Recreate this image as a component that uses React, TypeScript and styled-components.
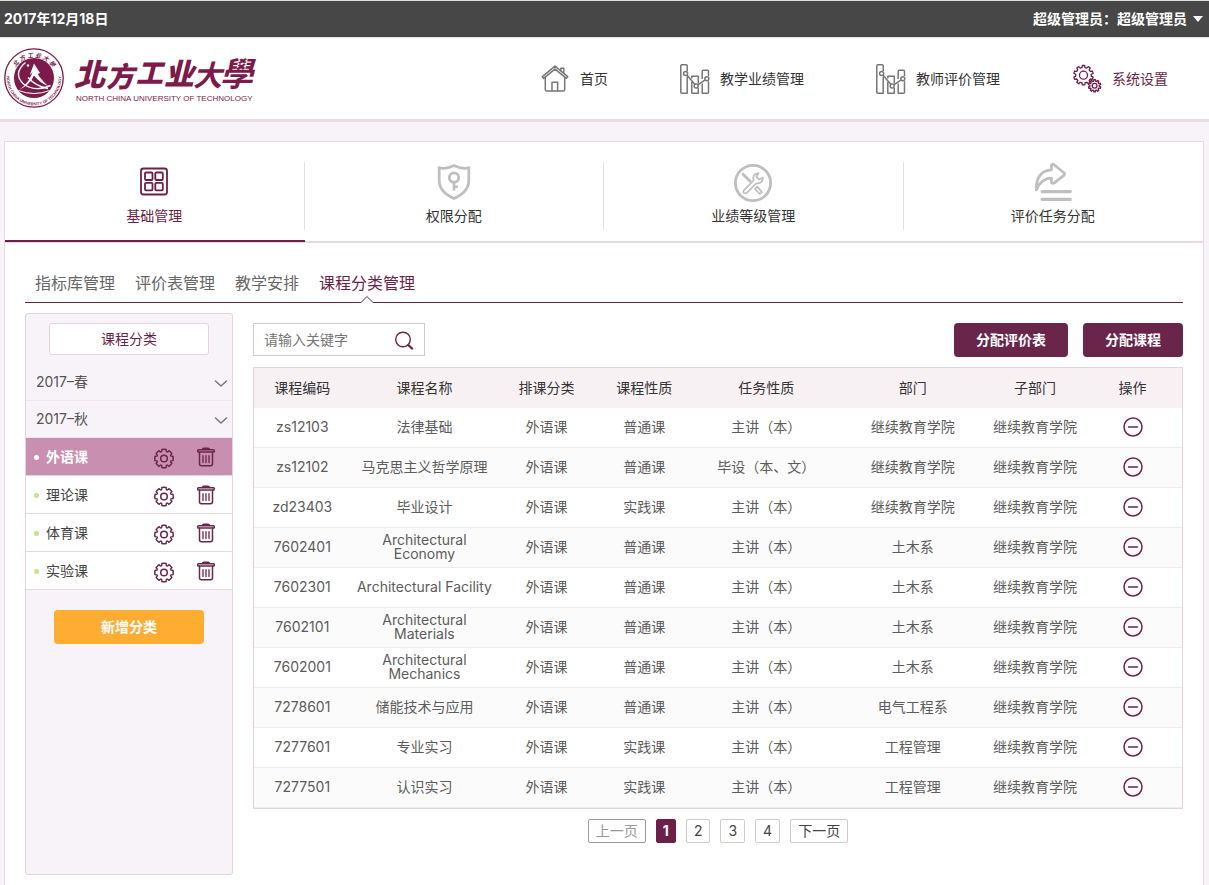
import React from "react";
import styled, { createGlobalStyle, css } from "styled-components";

const c = {
  wine: "#6b1f49",
  wineDark: "#69264a",
  logo: "#7d1a49",
  line: "#e8d9e0",
  tint: "#f8f3f8",
};

const GlobalStyle = createGlobalStyle`
  *, *::before, *::after { box-sizing: border-box; }
  body {
    margin: 0;
    background: ${c.tint};
    color: #333;
    font: 14px/20px Inter, "Noto Sans CJK SC", sans-serif;
  }
  button, input { font: inherit; color: inherit; }
  button { padding: 0; border: 0; background: none; cursor: pointer; }
  a { color: inherit; text-decoration: none; }
  ul { margin: 0; padding: 0; list-style: none; }
  svg { display: block; flex: none; }
`;

const Page = styled.div`
  display: flex;
  flex-direction: column;
  min-height: 100vh;
`;

const TopBar = styled.div`
  display: flex;
  align-items: center;
  justify-content: space-between;
  height: 38px;
  padding: 0 6px 0 4px;
  border-top: 1px solid #dcdedd;
  border-bottom: 1px solid #eddfe5;
  background: #474747;
  color: #fff;
  font-weight: 700;
`;

const UserMenu = styled.button`
  display: flex;
  align-items: center;
  gap: 6px;
  font-weight: 700;
`;

const Header = styled.header`
  display: flex;
  align-items: center;
  justify-content: space-between;
  height: 84px;
  padding: 0 41px 0 4px;
  border-bottom: 3px solid #e9dde3;
  background: #fff;
`;

const Nav = styled.nav`
  display: flex;
  gap: 72px;
`;

const NavLink = styled.a<{ $active?: boolean }>`
  display: flex;
  align-items: center;
  gap: 10px;
  color: ${(p) => (p.$active ? c.wine : "#333")};
  svg { color: ${(p) => (p.$active ? c.wine : "#777")}; }
`;

const Card = styled.main`
  flex: 1;
  margin: 19px 5px 0 4px;
  border: 1px solid ${c.line};
  border-bottom: 0;
  background: #fff;
`;

const Modules = styled.nav`
  display: flex;
  height: 101px;
  border-bottom: 2px solid ${c.line};
`;

const ModuleLink = styled.a<{ $active?: boolean }>`
  position: relative;
  display: flex;
  flex: 1;
  flex-direction: column;
  align-items: center;
  gap: 4px;
  padding: 20px 1px 0 0;
  color: ${(p) => (p.$active ? c.wine : "#333")};
  svg { color: ${(p) => (p.$active ? c.wine : "#bfbfbf")}; }

  &:not(:last-child)::before {
    content: "";
    position: absolute;
    top: 20px;
    right: 0;
    width: 1px;
    height: 68px;
    background: #e2e2e2;
  }
  ${(p) =>
    p.$active &&
    css`
      &::after {
        content: "";
        position: absolute;
        right: 0;
        bottom: -1px;
        left: 0;
        height: 2px;
        background: ${c.wine};
      }
    `}
`;

const SubTabs = styled.nav`
  display: flex;
  gap: 20px;
  height: 60px;
  margin: 0 20px;
  padding: 30px 10px 0;
  border-bottom: 1px solid ${c.wine};
  font-size: 16px;
`;

const SubTab = styled.a<{ $active?: boolean }>`
  position: relative;
  color: ${(p) => (p.$active ? c.wine : "#666")};
`;

const Pointer = styled.svg`
  position: absolute;
  bottom: -1px;
  left: 50%;
  margin-left: -7px;
`;

const Content = styled.div`
  display: flex;
  gap: 20px;
  padding: 10px 20px;
`;

const Sidebar = styled.aside`
  width: 208px;
  min-height: 562px;
  padding-top: 9px;
  border: 1px solid #e5d4dc;
  border-radius: 3px;
  background: ${c.tint};
`;

const SidebarTitle = styled.h2`
  width: 160px;
  margin: 0 auto 9px;
  border: 1px solid #e5d4dc;
  border-radius: 3px;
  background: #fff;
  color: ${c.wine};
  font-size: 14px;
  font-weight: 400;
  line-height: 30px;
  text-align: center;
`;

const Term = styled.button`
  display: flex;
  align-items: center;
  justify-content: space-between;
  width: 100%;
  height: 37px;
  padding: 0 4px 0 10px;
  border-bottom: 1px solid #efe6ec;
  color: #555;
`;

const Category = styled.li<{ $active?: boolean }>`
  display: flex;
  align-items: center;
  height: 38px;
  padding: 0 16px 0 8px;
  border-bottom: 1px solid ${c.line};
  background: ${(p) => (p.$active ? "#c98fb0" : "#fff")};
  color: ${(p) => (p.$active ? "#fff" : "#444")};
  font-weight: ${(p) => (p.$active ? 700 : 400)};

  &::before {
    content: "";
    width: 5px;
    height: 5px;
    margin: 2px 7px 0 0;
    border-radius: 50%;
    background: ${(p) => (p.$active ? "#fff" : "#bfe58d")};
  }
`;

const CategoryName = styled.span`
  flex: 1;
`;

const IconButton = styled.button`
  display: inline-block;
  color: ${c.wineDark};
`;

const CategoryActions = styled.div`
  display: flex;
  align-items: flex-start;
  gap: 22px;
  padding-top: 3px;
`;

const AddButton = styled.button`
  display: block;
  width: 150px;
  margin: 20px auto;
  border-radius: 4px;
  background: #ffac33;
  color: #fff;
  font-weight: 700;
  line-height: 34px;
`;

const Panel = styled.section`
  flex: 1;
  min-width: 0;
  padding-top: 10px;
`;

const Toolbar = styled.div`
  display: flex;
  align-items: flex-start;
  gap: 15px;
  margin-bottom: 10px;
`;

const SearchBox = styled.form`
  display: flex;
  align-items: center;
  width: 172px;
  height: 33px;
  margin-right: auto;
  padding: 0 10px;
  border: 1px solid #ccc;
`;

const SearchInput = styled.input`
  flex: 1;
  min-width: 0;
  padding: 0;
  border: 0;
  outline: 0;
  background: none;
  &::placeholder { color: #757575; }
`;

const ActionButton = styled.button`
  padding: 0 22px;
  border-radius: 4px;
  background: ${c.wineDark};
  color: #fff;
  font-weight: 700;
  line-height: 34px;
`;

const Table = styled.table`
  width: 100%;
  border: 1px solid #e5d4dc;
  border-spacing: 0;
  table-layout: fixed;
  line-height: 14px;
  text-align: center;
`;

const Col = styled.col<{ $wide: boolean }>`
  width: ${(p) => (p.$wide ? 135 : 90)}px;
`;

const HeadCell = styled.th`
  height: 40px;
  padding: 0 1px 0 0;
  background: #f8f1f4;
  font-weight: 400;
`;

const Row = styled.tr`
  &:nth-child(even) { background: #fbfbfb; }
`;

const Cell = styled.td`
  height: 40px;
  padding: 0 1px 2px 0;
  border-bottom: 1px solid #ececec;
  color: #5c5c5c;
`;

const RemoveButton = styled(IconButton)`
  vertical-align: middle;
`;

const Pagination = styled.nav`
  display: flex;
  justify-content: center;
  gap: 10px;
  margin-top: 10px;
`;

const PageButton = styled.button<{ $current?: boolean }>`
  height: 24px;
  padding: 0 7px;
  border: 1px solid #ccc;
  border-radius: 2px;
  color: #444;
  line-height: 22px;
  &:disabled { border-color: #999; color: #999; }
  ${(p) =>
    p.$current &&
    css`
      padding: 0 6px;
      border-color: ${c.wine};
      background: ${c.wine};
      color: #fff;
      font-weight: 700;
    `}
`;

/* Outline of a cog: flat-topped teeth spread evenly round a centre. */
function cog(cx: number, cy: number, teeth: number, outer: number, inner: number) {
  const step = (Math.PI * 2) / teeth;
  const points: string[] = [];
  for (let i = 0; i < teeth; i++) {
    const a = i * step - Math.PI / 2;
    [
      [-0.31, inner],
      [-0.2, outer],
      [0.2, outer],
      [0.31, inner],
    ].forEach(([k, r]) =>
      points.push(`${(cx + r * Math.cos(a + k * step)).toFixed(2)} ${(cy + r * Math.sin(a + k * step)).toFixed(2)}`)
    );
  }
  return `M${points.join("L")}Z`;
}

/* Outline of a softer cog, whose rounded lobes meet in small notches. */
function lobes(cx: number, cy: number, count: number, outer: number, notch: number) {
  const step = (Math.PI * 2) / count;
  const at = (a: number, r: number) => `${(cx + r * Math.cos(a)).toFixed(2)} ${(cy + r * Math.sin(a)).toFixed(2)}`;
  let d = `M${at(-Math.PI / 2 - step * 0.3, outer)}`;
  for (let i = 0; i < count; i++) {
    const a = i * step - Math.PI / 2;
    d += `A${outer} ${outer} 0 0 1 ${at(a + step * 0.3, outer)}`;
    d += `Q${at(a + step * 0.36, notch)} ${at(a + step * 0.5, notch)}`;
    d += `Q${at(a + step * 0.64, notch)} ${at(a + step * 0.7, outer)}`;
  }
  return d + "Z";
}

const stroke = {
  fill: "none",
  stroke: "currentColor",
  strokeLinecap: "round",
  strokeLinejoin: "round",
} as const;

const HomeIcon = () => (
  <svg width="30" height="30" viewBox="0 0 30 30" {...stroke} strokeWidth="1.5">
    <path d="M2.3 12.7 15 2.2l12.7 10.5-1.3 1.7L15 5.1 3.6 14.4z" />
    <path d="M20.8 6.6V4.2h3v5.1" />
    <path d="M5.3 13.3v12.2q0 1.6 1.6 1.6h16.2q1.6 0 1.6-1.6V13.3" />
    <path d="M12 27v-8.8h5.6V27" />
  </svg>
);

const ChartIcon = () => (
  <svg width="30" height="30" viewBox="0 0 30 30" {...stroke} strokeWidth="1.5" strokeLinecap="butt">
    <path d="M7.2 7.2V1.8q0-1-1-1H1.8q-1 0-1 1v26.5q0 .9 1 .9h5.400V12.500" />
    <path d="M11.800 14.500v-2.200h6.500v7.200M11.800 18.100v11.100h6.500v-5.100" />
    <path d="M22.200 14.900V7.300q0-1 1-1h4.300q1 0 1 1v4.600M28.500 17.300v10.900q0 1-1 1h-5.300V19.500" />
    <circle cx="5.600" cy="9.500" r="2" />
    <circle cx="16.200" cy="22.100" r="2" />
    <circle cx="26.800" cy="14.700" r="2" />
    <path d="m6.900 11.100 8 9.500M17.800 20.800l7.400-5" />
  </svg>
);

const CogsIcon = () => (
  <svg width="30" height="30" viewBox="0 0 30 30" {...stroke} strokeWidth="1.300">
    <path d={cog(11.5, 11.2, 10, 9.8, 7.8)} />
    <circle cx="11.500" cy="11.200" r="4" />
    <path d={cog(22.6, 21.8, 10, 6.2, 4.7)} fill="#fff" />
    <circle cx="22.600" cy="21.800" r="2.400" />
  </svg>
);

const GridIcon = () => (
  <svg width="40" height="40" viewBox="0 0 40 40" {...stroke} strokeWidth="1.800">
    <rect x="7" y="6.500" width="26" height="26" rx="2.500" />
    <rect x="11" y="10.500" width="7.500" height="7.500" rx="1" />
    <rect x="21.300" y="10.500" width="7.500" height="7.500" rx="1" />
    <rect x="11" y="20.800" width="7.500" height="7.500" rx="1" />
    <rect x="21.300" y="20.800" width="7.500" height="7.500" rx="1" />
  </svg>
);

const ShieldIcon = () => (
  <svg width="40" height="40" viewBox="0 0 40 40" {...stroke} strokeWidth="2.800" strokeLinejoin="miter">
    <path d="M20 3.600q-7 3.700-14.800 2.300v12.600Q5.200 30 20 36.400 34.800 30 34.800 18.500V5.900Q27 7.300 20 3.600z" />
    <circle cx="20" cy="15.600" r="4.700" />
    <path d="M20 20.500v8M20 24.800h4" strokeWidth="2.600" strokeLinecap="butt" />
  </svg>
);

const ToolsIcon = () => (
  <svg width="40" height="40" viewBox="0 0 40 40" {...stroke} strokeWidth="1.700">
    <circle cx="20" cy="21" r="17.600" strokeWidth="2.800" />
    <path d="M10.800 28.300 20.600 18.500Q18.800 12.500 25.600 11.200L23.400 14.600 26.200 17.600 30 15.400Q29.800 21.800 23.300 21.400L13.600 31.100Q11.800 32 10.800 30.700 9.800 29.500 10.800 28.300z" />
    <path d="m10 12.200 7.200 7" strokeWidth="2.800" />
    <path d="m24.400 24.600 4.500 5.700-2 1.600-5-5z" />
  </svg>
);

const ShareIcon = () => (
  <svg width="40" height="40" viewBox="0 0 40 40" {...stroke} strokeWidth="2.800">
    <path d="M3.300 28C2.800 15.500 8.600 8.100 18.400 7.800V3.500q1.200-2.200 3-.5l9.800 8q1 1.100 0 2.200l-9.800 7.600q-2 1.200-3-.6v-4Q8.300 16.200 3.300 28z" />
    <path d="M9.200 29.600h28M9.200 37.400h28" strokeWidth="3.200" />
  </svg>
);

const ChevronIcon = () => (
  <svg width="14" height="14" viewBox="0 0 14 14" {...stroke} stroke="#777" strokeWidth="1.500">
    <path d="m1.500 6 5.500 5 5.500-5" />
  </svg>
);

const GearIcon = () => (
  <svg width="20" height="22" viewBox="0 0 20 22" {...stroke} strokeWidth="1.500">
    <path d={lobes(10, 11.5, 8, 9.2, 7.2)} />
    <circle cx="10" cy="11.500" r="3.300" />
  </svg>
);

const TrashIcon = () => (
  <svg width="20" height="20" viewBox="0 0 20 20" {...stroke} strokeWidth="1.500">
    <rect x="1.700" y="2.800" width="16.600" height="2.200" rx=".8" />
    <path d="M6.600 2.600q0-1.400 1.400-1.400h4q1.400 0 1.400 1.400M3.500 5.200v11.600q0 2 2 2h9q2 0 2-2V5.200" />
    <path d="M7 8.600v7M10 8.600v7M13 8.600v7" strokeWidth="1.300" />
  </svg>
);

const SearchIcon = () => (
  <svg width="20" height="20" viewBox="0 0 20 20" {...stroke} strokeWidth="1.400">
    <circle cx="9" cy="9.500" r="7.300" />
    <path d="m14.300 15 3.700 3.500" strokeWidth="2.400" />
  </svg>
);

const MinusIcon = () => (
  <svg width="20" height="20" viewBox="0 0 20 20" {...stroke} strokeWidth="1.500">
    <circle cx="10" cy="10" r="9" />
    <path d="M5.500 10h9" />
  </svg>
);

const Logo = () => (
  <svg width="264" height="62" viewBox="0 0 264 62" fill={c.logo} role="img" aria-label="北方工业大學">
    <defs>
      <path id="ring-top" d="M8.700 27a21.700 21.700 0 0 1 42.600 0" />
      <path id="ring-bottom" d="M4.600 20a27.300 27.300 0 1 0 50.800 0" />
    </defs>
    <circle cx="30" cy="30" r="29.200" fill="none" stroke={c.logo} strokeWidth="1.300" />
    <circle cx="30" cy="30" r="20" />
    <path d="M15 42Q26 35 30 19.500q4.500 10 14 18.500-7.500-2.500-14-10.500-4 9-15 14.500z" fill="#fff" />
    <path d="M30 15.500 36 25l-2.800 1.200L30 23l-4.200 4z" fill="#fff" />
    <path d="M21.500 14.500Q8.500 25.500 19.500 36q12 8.500 27 1.500M24 29.500q8 9 20 11" fill="none" stroke="#fff" strokeWidth="1.400" />
    <path d="M14.500 42.500Q30 48.500 45.500 42.500" fill="none" stroke="#fff" strokeWidth="1" />
    <circle cx="24" cy="17.500" r="1.200" fill="#fff" />
    <text fontSize="6" fontWeight="700" fontStyle="italic" fontFamily='"Noto Sans CJK TC", sans-serif' textAnchor="middle">
      <textPath href="#ring-top" startOffset="50%">北 方 工 业 大 學</textPath>
    </text>
    <text fontSize="4" fontWeight="700" fontFamily='"Liberation Sans", sans-serif' textAnchor="middle">
      <textPath href="#ring-bottom" startOffset="50%">NORTH CHINA UNIVERSITY OF TECHNOLOGY</textPath>
    </text>
    <text fontWeight="900" fontStyle="italic" fontFamily='"Noto Sans CJK TC", sans-serif'>
      <tspan x="70" y="38" fontSize="31">北</tspan>
      <tspan x="102" y="39" fontSize="28">方</tspan>
      <tspan x="132" y="35" fontSize="27">工</tspan>
      <tspan x="160" y="37" fontSize="30">业</tspan>
      <tspan x="189" y="38" fontSize="29" fontWeight="700">大</tspan>
      <tspan x="216" y="38" fontSize="33" fontWeight="700">學</tspan>
    </text>
    <text x="72" y="53" fontSize="8" fontFamily='"Liberation Sans", sans-serif'>
      NORTH CHINA UNIVERSITY OF TECHNOLOGY
    </text>
  </svg>
);

const navItems = [
  { label: "首页", icon: <HomeIcon /> },
  { label: "教学业绩管理", icon: <ChartIcon /> },
  { label: "教师评价管理", icon: <ChartIcon /> },
  { label: "系统设置", icon: <CogsIcon />, active: true },
];

const modules = [
  { label: "基础管理", icon: <GridIcon />, active: true },
  { label: "权限分配", icon: <ShieldIcon /> },
  { label: "业绩等级管理", icon: <ToolsIcon /> },
  { label: "评价任务分配", icon: <ShareIcon /> },
];

const subTabs = ["指标库管理", "评价表管理", "教学安排", "课程分类管理"];
const terms = ["2017–春", "2017–秋"];
const categories = ["外语课", "理论课", "体育课", "实验课"];
const columns = ["课程编码", "课程名称", "排课分类", "课程性质", "任务性质", "部门", "子部门", "操作"];
const wideColumns = [1, 4, 5];

const courses = [
  ["zs12103", "法律基础", "外语课", "普通课", "主讲（本）", "继续教育学院", "继续教育学院"],
  ["zs12102", "马克思主义哲学原理", "外语课", "普通课", "毕设（本、文）", "继续教育学院", "继续教育学院"],
  ["zd23403", "毕业设计", "外语课", "实践课", "主讲（本）", "继续教育学院", "继续教育学院"],
  ["7602401", "Architectural Economy", "外语课", "普通课", "主讲（本）", "土木系", "继续教育学院"],
  ["7602301", "Architectural Facility", "外语课", "普通课", "主讲（本）", "土木系", "继续教育学院"],
  ["7602101", "Architectural Materials", "外语课", "普通课", "主讲（本）", "土木系", "继续教育学院"],
  ["7602001", "Architectural Mechanics", "外语课", "普通课", "主讲（本）", "土木系", "继续教育学院"],
  ["7278601", "储能技术与应用", "外语课", "普通课", "主讲（本）", "电气工程系", "继续教育学院"],
  ["7277601", "专业实习", "外语课", "实践课", "主讲（本）", "工程管理", "继续教育学院"],
  ["7277501", "认识实习", "外语课", "实践课", "主讲（本）", "工程管理", "继续教育学院"],
];

export default function App() {
  return (
    <Page>
      <GlobalStyle />
      <TopBar>
        <time dateTime="2017-12-18">2017年12月18日</time>
        <UserMenu type="button">
          超级管理员：超级管理员
          <svg width="10" height="6" viewBox="0 0 10 6" fill="currentColor">
            <path d="M0 0h10L5 6z" />
          </svg>
        </UserMenu>
      </TopBar>

      <Header>
        <Logo />
        <Nav>
          {navItems.map((n) => (
            <NavLink href="#" key={n.label} $active={n.active}>
              {n.icon}
              {n.label}
            </NavLink>
          ))}
        </Nav>
      </Header>

      <Card>
        <Modules>
          {modules.map((m) => (
            <ModuleLink href="#" key={m.label} $active={m.active}>
              {m.icon}
              {m.label}
            </ModuleLink>
          ))}
        </Modules>

        <SubTabs>
          {subTabs.map((t, i) => (
            <SubTab href="#" key={t} $active={i === 3}>
              {t}
              {i === 3 && (
                <Pointer width="14" height="8" viewBox="0 0 14 8">
                  <path d="M1 7.500 7 1l6 6.500V8H1z" fill="#fff" />
                  <path d="M0 7.500h1L7 1.500l6 6h1" fill="none" stroke={c.wine} />
                </Pointer>
              )}
            </SubTab>
          ))}
        </SubTabs>

        <Content>
          <Sidebar>
            <SidebarTitle>课程分类</SidebarTitle>
            {terms.map((t) => (
              <Term type="button" key={t}>
                {t}
                <ChevronIcon />
              </Term>
            ))}
            <ul>
              {categories.map((name, i) => (
                <Category key={name} $active={i === 0}>
                  <CategoryName>{name}</CategoryName>
                  <CategoryActions>
                    <IconButton type="button" aria-label={`设置${name}`}>
                      <GearIcon />
                    </IconButton>
                    <IconButton type="button" aria-label={`删除${name}`}>
                      <TrashIcon />
                    </IconButton>
                  </CategoryActions>
                </Category>
              ))}
            </ul>
            <AddButton type="button">新增分类</AddButton>
          </Sidebar>

          <Panel>
            <Toolbar>
              <SearchBox>
                <SearchInput type="text" aria-label="关键字" placeholder="请输入关键字" />
                <IconButton type="button" aria-label="搜索">
                  <SearchIcon />
                </IconButton>
              </SearchBox>
              <ActionButton type="button">分配评价表</ActionButton>
              <ActionButton type="button">分配课程</ActionButton>
            </Toolbar>

            <Table>
              <colgroup>
                {columns.map((h, i) => (
                  <Col key={h} $wide={wideColumns.includes(i)} />
                ))}
              </colgroup>
              <thead>
                <tr>
                  {columns.map((h) => (
                    <HeadCell key={h} scope="col">{h}</HeadCell>
                  ))}
                </tr>
              </thead>
              <tbody>
                {courses.map((course) => (
                  <Row key={course[0]}>
                    {course.map((value, i) => (
                      <Cell key={i}>{value}</Cell>
                    ))}
                    <Cell>
                      <RemoveButton type="button" aria-label={`移除${course[0]}`}>
                        <MinusIcon />
                      </RemoveButton>
                    </Cell>
                  </Row>
                ))}
              </tbody>
            </Table>

            <Pagination aria-label="分页">
              <PageButton type="button" disabled>上一页</PageButton>
              <PageButton type="button" $current>1</PageButton>
              <PageButton type="button">2</PageButton>
              <PageButton type="button">3</PageButton>
              <PageButton type="button">4</PageButton>
              <PageButton type="button">下一页</PageButton>
            </Pagination>
          </Panel>
        </Content>
      </Card>
    </Page>
  );
}
